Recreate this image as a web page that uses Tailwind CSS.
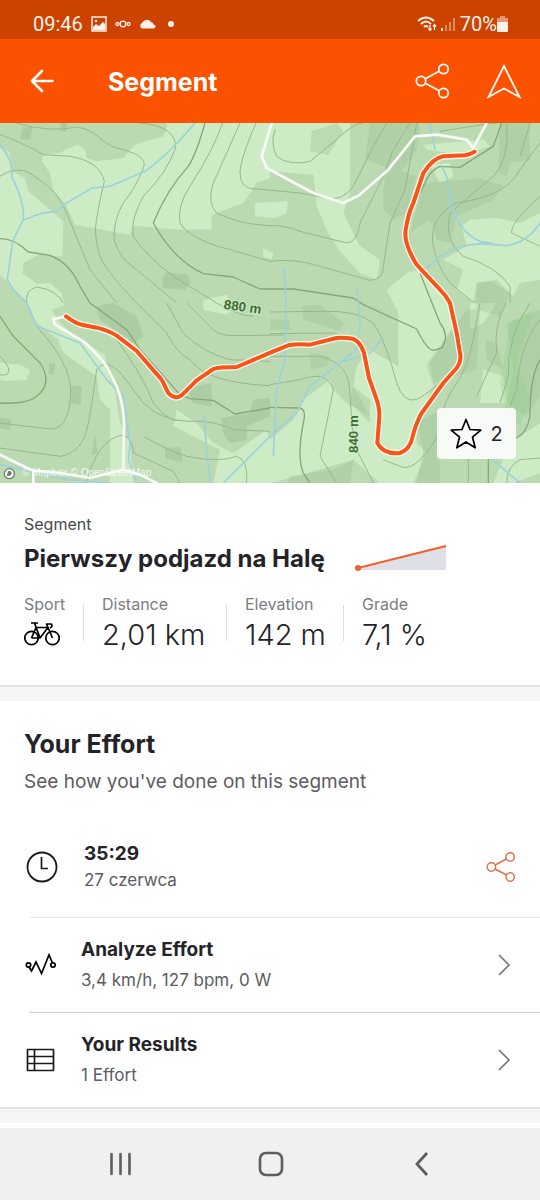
<!DOCTYPE html>
<html lang="en">
<head>
    <meta charset="UTF-8">
    <meta name="viewport" content="width=device-width, initial-scale=1.0">
    <title>Segment</title>
    <script src="https://cdn.jsdelivr.net/npm/@tailwindcss/browser@4"></script>
</head>
<body class="bg-white font-['Inter','Liberation_Sans',sans-serif] text-[#242428]">
    <div class="flex min-h-screen w-full flex-col">
        <!-- status bar -->
        <div class="flex h-[39px] items-center justify-between bg-[#cc4300] pr-8 pl-[33px] pt-2 font-['Roboto',sans-serif] text-xl text-[#fff0e8]">
            <div class="flex items-center gap-2">
                <span>09:46</span>
                <svg class="h-4 w-4" viewBox="0 0 16 16" fill="none" stroke="currentColor" stroke-width="1.500">
                    <rect x="1" y="1" width="14" height="14"/>
                    <path d="M2 14v-3l3-3 3 2 4-4 2 2v6z" fill="currentColor" stroke="none"/>
                    <circle cx="5" cy="5" r="1.200" fill="currentColor" stroke="none"/>
                </svg>
                <svg class="h-4 w-4" viewBox="0 0 16 16" fill="none" stroke="currentColor" stroke-width="1.300">
                    <circle cx="8" cy="8" r="2.800"/><circle cx="2.500" cy="8" r="1.500"/><circle cx="13.500" cy="8" r="1.500"/>
                </svg>
                <svg class="h-4 w-[17px]" viewBox="0 0 17 16" fill="currentColor"><path d="M3 12.500a3 3 0 0 1 0-5.500 5 4.500 0 0 1 9-1 3 3 0 0 1 2.500 2.500 2 2 0 0 1 0 4z"/></svg>
                <span class="ml-1 h-[6px] w-[6px] rounded-full bg-current"></span>
            </div>
            <div class="flex items-center gap-1">
                <svg class="h-[18px] w-[39px]" viewBox="0 0 39 18" fill="none" stroke="currentColor" stroke-width="1.800">
                    <path d="M1 6q8-7 16 0M4 9q5-5 10 0M7 12q2-2 4 0"/>
                    <path d="M13 10v5M11.500 13.500l1.500 2 1.500-2M17.500 15v-5M16 11.500l1.500-2 1.500 2" stroke-width="1.300"/>
                    <path d="M25 16v-3"/>
                    <path d="M29 16v-6M33 16V7M37 16V3" opacity=".45"/>
                </svg>
                <span>70%</span>
                <svg class="-ml-1 h-4 w-[11px]" viewBox="0 0 11 16" fill="currentColor"><path d="M3 0h5v2h3v4H0V2h3z" opacity=".5"/><path d="M0 6h11v9q0 1-1 1H1q-1 0-1-1z"/></svg>
            </div>
        </div>

        <!-- app bar -->
        <header class="flex h-[84px] items-center bg-[#fc5200] pr-[19px] pl-[30px] text-white">
            <button type="button" aria-label="Back">
                <svg class="h-6 w-6" viewBox="0 0 24 24" fill="none" stroke="currentColor" stroke-width="2.600" stroke-linecap="round" stroke-linejoin="round"><path d="M22.500 12H2M12 2L2 12l10 10"/></svg>
            </button>
            <h1 class="ml-[54px] flex-1 pt-1 text-[25px] font-bold">Segment</h1>
            <button type="button" aria-label="Share">
                <svg class="h-9 w-9" viewBox="0 0 36 36" fill="none" stroke="currentColor" stroke-width="1.700"><circle cx="6" cy="18" r="4.700"/><circle cx="28.500" cy="6" r="4.700"/><circle cx="28.500" cy="30" r="4.700"/><path d="M10.200 15.700l14-7.400M10.200 20.300l14 7.400"/></svg>
            </button>
            <button type="button" aria-label="Navigate" class="ml-9">
                <svg class="h-9 w-[34px]" viewBox="0 0 34 36" fill="none" stroke="currentColor" stroke-width="1.700"><path d="M17 3l15.500 31L17 25.500 1.500 34z"/></svg>
            </button>
        </header>

        <!-- map -->
        <div class="relative">
            <svg class="block h-[360px] w-full" viewBox="0 0 1620 1080" preserveAspectRatio="xMidYMid slice" fill="none">
                <defs>
                    <path id="track" d="M198 580Q225 600 245 605L290 614Q325 622 350 638L410 684 450 730 485 770 505 810Q528 835 550 812L590 772 640 738Q655 732 710 732L820 685 865 667Q890 662 930 665L1010 645Q1035 643 1060 648 1080 655 1092 690L1107 765 1130 830Q1138 850 1138 880L1132 960Q1150 995 1200 990 1230 980 1238 940 1248 900 1265 870L1330 780 1370 735Q1385 715 1380 690L1370 630 1350 540Q1340 520 1320 500L1250 425Q1210 360 1217 320 1225 270 1240 240L1270 150Q1300 105 1330 100L1395 97Q1412 94 1424 86"/>
                </defs>
                <rect width="1620" height="1080" fill="#bbdab2"/>
                <!-- clearings -->
                <g fill="#cdecc5">
                    <path d="M0 75L30 88 35 145 75 165 85 205 150 260 190 295 187 400 150 398 120 393 70 420 68 450 110 482 150 480 185 510 195 545 155 560 180 600 240 650 315 695 320 740 345 800 360 900 390 960 400 1080H330V860L300 830 290 760 190 690 175 650 110 600 80 535 0 455z"/>
                    <path d="M500 15L490 40 405 65 370 105 290 115 258 105 258 85 235 65 205 75 180 90 130 95 125 115 150 150 160 200 200 250 225 305 390 335 400 308 540 320 635 318 635 275 730 240 770 180 810 165 810 145 940 155 950 250 985 330 1020 385 1080 450 1130 470 1140 410 1080 370 1030 270 1050 210 1050 0H980L925 50 920 85 990 120 1040 0H500z"/>
                    <path d="M765 240L863 235 860 270 825 285 765 280zM788 375L820 390 815 408 790 402zM610 530L680 515 700 560 680 575 610 560z"/>
                    <path d="M1160 500L1220 450 1260 440 1310 490 1350 545 1360 610 1280 725 1300 790 1250 890 1250 960 1280 990 1240 1080H1050L1060 1010 1110 880 1060 790 1070 730 1110 680 1195 730V570z"/>
                    <path d="M1290 125L1350 120 1360 160 1320 180zM1270 65L1450 50 1470 70 1390 95 1280 80z"/>
                    <path d="M1385 310L1410 290 1490 285 1560 300 1620 270V470L1560 480 1540 520 1490 470 1430 480 1420 540 1370 500 1390 440 1330 410 1400 370z"/>
                    <path d="M810 950L880 890 910 830 990 770 1000 800 1040 840 1110 880 1060 1010 890 1060 810 1080H640L660 980 600 950 520 910 530 860 590 900 640 960 700 990 800 920z"/>
                    <path d="M0 720L60 725 90 740 80 770 20 775 0 770z"/>
                    <path d="M1410 540L1490 540 1450 600 1410 620zM1450 740L1510 760 1520 840 1440 840zM1530 960L1620 900V1050L1540 1080H1480z"/>
                </g>
                <!-- dense forest -->
                <g fill="#9dbd93" fill-opacity=".35">
                    <path d="M70 12H98L90 50 60 48zM185 0H205L195 28 178 22zM500 448L562 455 572 480 555 500 490 495 486 465zM290 550L340 540 410 580 430 640 400 660 300 590z" fill-opacity=".5"/>
                    <path d="M148 720L166 722 162 756 145 752zM215 787L245 790 242 845 210 840zM0 885L34 888 30 920 0 915zM285 935L292 990 275 995zM495 975L540 972 548 1018 495 1005zM560 795L635 780 635 850 580 840zM665 885L750 870 760 830 810 825V880L740 910 740 950 690 960 670 930z" fill-opacity=".5"/>
                    <path d="M935 25L1010 0 1030 25 985 95 930 85zM1110 0L1260 0 1250 80 1200 150 1140 125 1095 110zM1160 130L1250 160 1220 270 1180 290 1150 260 1150 200zM1270 180L1390 170 1440 165 1510 190 1480 230 1370 280 1350 360 1310 350 1290 290 1230 330z"/>
                    <path d="M1500 0H1590V110L1530 120 1520 160 1495 150zM1430 480L1470 475 1530 510 1500 580 1430 560zM905 550L960 545 1030 600 1020 625 980 610 910 590zM930 690L990 700 980 730 930 740zM810 590H870V620H810zM1455 650L1490 660 1510 740 1460 710zM1520 600L1620 560V820L1580 880 1520 840 1540 750z"/>
                    <path d="M1290 720L1400 560 1440 560 1430 740 1300 780zM1250 900L1320 860 1320 1080H1250L1270 980zM1110 830L1060 790 1050 840 1110 900zM870 1060L1000 1040 1060 1010 1140 1080H860z"/>
                </g>
                <path d="M1530 600L1600 560 1550 720 1590 820 1560 910 1520 880 1500 780z" fill="#8fce8b" fill-opacity=".3"/>
                <!-- contour lines -->
                <g stroke="#98b78d" stroke-width="3" stroke-linejoin="round">
                    <path d="M0 35Q60 55 130 95L210 100Q300 115 313 175 290 270 286 320 290 390 310 420 340 470 430 560L500 630Q530 690 570 710 620 780 810 788"/>
                    <path d="M50 0Q150 30 230 12C290 20 300 60 350 75Q440 95 432 130 410 190 370 240 340 290 342 350 360 410 410 440L530 540"/>
                    <path d="M420 0Q530 10 527 75 500 150 430 220 390 290 400 340 440 400 520 460L650 540Q720 580 760 580"/>
                    <path d="M668 0Q640 80 570 190 530 250 540 300 570 350 690 380L810 415Q880 405 960 430L1110 472Q1150 470 1150 430L1170 300 1215 200 1240 60 1250 0"/>
                    <path d="M720 0L640 180Q620 240 650 270 720 305 810 308 850 305 900 325L1040 360Q1070 360 1080 300L1150 160 1180 80 1230 0"/>
                    <path d="M768 0Q720 110 720 150 720 200 770 198L900 210 1000 228Q1050 220 1070 170L1120 70 1160 0"/>
                    <path d="M825 20Q810 60 830 100 870 130 930 115L1010 50Q1060 0 1090 0"/>
                    <path d="M0 160Q60 120 110 165 180 210 200 270L270 440 350 540"/>
                    <path d="M80 540Q75 500 110 492 170 500 190 540M110 610Q210 720 212 800 210 920 150 918L40 905 0 900"/>
                    <path d="M0 975L180 1000Q250 990 265 900 280 820 290 740 320 700 370 760L430 840Q480 890 560 895 640 890 700 920L810 925"/>
                    <path d="M260 1080Q290 950 370 935 400 950 400 990L520 1045 540 1080M350 650Q430 760 460 840 500 890 530 893M430 940Q500 980 560 1000 660 1020 710 1000 745 1010 740 1080"/>
                    <path d="M500 540L550 630Q610 690 690 710L810 715M560 540L620 600Q650 640 700 638L850 636M0 700Q40 740 20 755L0 756"/>
                    <path d="M810 567L960 565Q1070 560 1120 600 1160 660 1190 780 1210 840 1250 830 1300 800 1330 770M810 632L1010 630M810 700L960 700Q1040 720 1048 790L1060 960 1120 1080M810 785L900 770Q980 740 1000 800L980 900 960 1000 1010 1080"/>
                    <path d="M1620 60L1560 140Q1520 220 1370 240 1290 280 1298 360 1310 430 1350 480L1410 530 1430 540M1520 0Q1530 110 1480 160 1420 210 1350 270 1330 350 1390 400 1490 430 1530 490L1530 540M1320 25Q1440 5 1490 0M1590 0L1560 100M1620 220Q1530 300 1535 330L1620 370"/>
                    <path d="M1440 540L1420 650Q1400 740 1370 780 1320 850 1330 900L1300 960Q1240 1050 1200 1030L1150 1010M1520 540Q1480 600 1490 690L1430 820M1590 540Q1520 640 1525 760L1500 840M1620 590Q1560 660 1550 800L1530 850M1620 1005L1560 1010Q1520 1030 1520 1080M1405 1000V1080"/>
                </g>
                <!-- index contours -->
                <g stroke="#86a778" stroke-width="4" stroke-linejoin="round">
                    <path d="M615 0Q590 90 565 130 500 200 460 300 520 410 610 452L700 462 780 498H880L1060 525 1090 545 1250 618Q1280 680 1300 682L1325 675Q1350 640 1320 600L1300 550 1260 450M0 347Q40 345 85 387L150 397Q210 420 240 490L270 540 380 620 420 680 500 770 540 815 570 827 640 832 705 873 810 855"/>
                    <path d="M0 580L40 640 120 720Q160 780 110 820 80 845 0 840M810 853L900 855Q920 860 910 900 890 1000 910 1050L930 1080M1505 0L1480 70 1380 133 1320 130Q1290 140 1270 190L1230 270M1620 710Q1590 760 1590 880 1580 930 1550 945M1465 1000V1080"/>
                </g>
                <!-- streams -->
                <g stroke="#9dd2da" stroke-width="5" stroke-linejoin="round">
                    <path d="M585 0Q500 100 435 145L330 190 275 195 200 240 170 265 120 272 68 292M0 65Q40 110 35 160 75 240 70 290L38 355 22 470Q50 520 80 540L110 608 240 660 320 770 370 820 390 960 385 1010 410 1080"/>
                    <path d="M610 875L630 1080M670 1080L810 940 890 870 930 790 1070 680 1080 600 1070 490M1030 715L1110 690 1150 645M852 435L858 540 855 710 830 800 820 1000"/>
                    <path d="M1290 0L1305 80M1325 130L1340 160 1350 240Q1380 330 1440 355L1480 362M1620 300Q1580 360 1520 368L1440 362 1380 370 1320 400 1280 435M1470 1005L1560 1080M0 1025L200 1070 330 1080"/>
                </g>
                <!-- roads -->
                <g stroke="#f8fbf6" stroke-width="8" stroke-linejoin="round" stroke-linecap="round">
                    <path d="M815 0L785 100 800 135 940 210 1030 240 1075 218 1165 140 1245 40 1310 35 1400 50 1420 75 1460 0"/>
                    <path d="M200 580L160 588 165 605 250 655Q290 690 320 730L350 790Q370 840 372 900L370 1035M0 995L50 1020 100 1043 180 1050 270 1065 370 1040 420 1055 470 1080M100 1045V1080"/>
                </g>
                <!-- recorded track -->
                <g stroke-linejoin="round" stroke-linecap="round">
                    <use href="#track" stroke="#fff8ea" stroke-width="20"/>
                    <use href="#track" stroke="#f5551a" stroke-width="12"/>
                </g>
                <g fill="#3f6b35" stroke="#cdebc5" stroke-width="6" paint-order="stroke" font-family="Liberation Sans, sans-serif" font-size="40" font-weight="bold">
                    <text transform="translate(670 557) rotate(8)">880 m</text>
                    <text transform="translate(1073 990) rotate(-90)">840 m</text>
                </g>
                <circle cx="28" cy="1052" r="15" fill="#fff" stroke="#6f7d6c" stroke-width="4"/>
                <path d="M20 1060l4-15q9-4 11 4t-15 11z" fill="#6f7d6c"/>
                <text x="66" y="1060" fill="#fff" fill-opacity=".8" font-family="Liberation Sans, sans-serif" font-size="30">© Mapbox © OpenStreetMap</text>
            </svg>
            <button type="button" class="absolute right-6 bottom-6 flex h-[51px] w-[79px] items-center justify-center gap-2 rounded bg-[#f8faf7] text-xl" aria-label="2 stars">
                <svg class="h-8 w-8" viewBox="0 0 32 32" fill="none" stroke="#000" stroke-width="1.700" stroke-linejoin="round"><path d="M16 1.500l4 10 10.800.7-8.300 7 2.700 10.600-9.200-5.800-9.200 5.800 2.700-10.600-8.300-7 10.800-.7z"/></svg>
                <span>2</span>
            </button>
        </div>

        <main class="flex-1">
            <section class="border-b-2 border-[#e3e3e6] px-6 pt-[29px] pb-[31px]">
                <p class="text-base leading-6 text-[#494950]">Segment</p>
                <div class="flex h-[42px] items-center gap-[30px]">
                    <h2 class="pt-1 text-2xl font-bold">Pierwszy podjazd na Halę</h2>
                    <svg class="h-[27px] w-[92px] shrink-0" viewBox="0 0 92 27">
                        <path d="M3 25L91 2v24H3z" fill="#dfdfe8"/><path d="M3 24L91 2" stroke="#f0602c" stroke-width="2"/><circle cx="3" cy="24" r="3" fill="#f0602c"/>
                    </svg>
                </div>
                <div class="mt-[14px] grid grid-cols-[59px_143px_117px_1fr]">
                    <div>
                        <p class="text-base leading-6 text-[#7c7c82]">Sport</p>
                        <svg class="mt-1 h-7 w-9" viewBox="0 0 36 28" fill="none" stroke="#000" stroke-width="1.700" stroke-linejoin="round"><circle cx="7.500" cy="18" r="6.700"/><circle cx="28.500" cy="18" r="6.700"/><path d="M7.500 18h8.500L24 7.500H12L7.500 18M16 18L10.500 3M7 3h7M28.500 18L22.500 4H27q2.500 2-1 4"/></svg>
                    </div>
                    <div class="flex items-center gap-[18px]">
                        <div class="h-9 w-px bg-[#dcdce0]"></div>
                        <div><p class="text-base leading-6 text-[#7c7c82]">Distance</p><p class="text-[29px] leading-[38px] font-light">2,01 km</p></div>
                    </div>
                    <div class="flex items-center gap-[18px]">
                        <div class="h-9 w-px bg-[#dcdce0]"></div>
                        <div><p class="text-base leading-6 text-[#7c7c82]">Elevation</p><p class="text-[29px] leading-[38px] font-light whitespace-nowrap">142 m</p></div>
                    </div>
                    <div class="flex items-center gap-[18px]">
                        <div class="h-9 w-px bg-[#dcdce0]"></div>
                        <div><p class="text-base leading-6 text-[#7c7c82]">Grade</p><p class="text-[29px] leading-[38px] font-light">7,1 %</p></div>
                    </div>
                </div>
            </section>
            <div class="h-[14px] bg-[#f6f6f9]"></div>

            <section class="border-b-2 border-[#e3e3e6]">
                <div class="px-6 pt-[25px]">
                    <h2 class="text-[25px] leading-9 font-bold">Your Effort</h2>
                    <p class="mt-1 text-[19px] leading-8 text-[#5c5c62]">See how you've done on this segment</p>
                </div>
                <div class="mt-[19px] flex h-[100px] items-center pr-6 pl-[26px]">
                    <svg class="h-8 w-8" viewBox="0 0 32 32" fill="none" stroke="#1a1a1d" stroke-width="1.800"><circle cx="16" cy="16" r="14.500"/><path d="M15.500 6v11.500H22" stroke-width="1.700"/></svg>
                    <div class="ml-[26px] flex-1">
                        <p class="text-[19px] leading-[26px] font-bold">35:29</p>
                        <p class="text-[17px] leading-[26px] text-[#5c5c62]">27 czerwca</p>
                    </div>
                    <button type="button" aria-label="Share effort">
                        <svg class="h-[30px] w-[30px]" viewBox="0 0 36 36" fill="none" stroke="#e0704c" stroke-width="1.800"><circle cx="6.500" cy="18" r="5"/><circle cx="29" cy="6" r="5"/><circle cx="29" cy="30" r="5"/><path d="M11 15.600l13.500-7.200M11 20.400l13.500 7.200"/></svg>
                    </button>
                </div>
                <div class="ml-[30px] h-px bg-[#e3e3e6]"></div>
                <a href="#" class="flex h-[94px] items-center pr-[29px] pl-[25px]">
                    <svg class="h-8 w-8" viewBox="0 0 32 32" fill="none" stroke="#000" stroke-width="1.700"><circle cx="3.500" cy="16" r="2.200"/><circle cx="28" cy="16" r="2.200"/><path d="M4 18l2.500 4 4.500-9 5.500 11.500L24 6l3.500 8"/></svg>
                    <div class="ml-6 flex-1">
                        <p class="text-[19px] leading-[30px] font-bold">Analyze Effort</p>
                        <p class="text-[17px] leading-[30px] text-[#5c5c62]">3,4 km/h, 127 bpm, 0 W</p>
                    </div>
                    <svg class="h-6 w-[14px]" viewBox="0 0 14 24" fill="none" stroke="#77777c" stroke-width="1.700"><path d="M2 2l10 10L2 22"/></svg>
                </a>
                <div class="ml-[30px] h-px bg-[#cfcfd2]"></div>
                <a href="#" class="flex h-[94px] items-center pr-[29px] pl-[25px]">
                    <svg class="h-8 w-8" viewBox="0 0 32 32" fill="none" stroke="#1a1a1d" stroke-width="1.700"><rect x="2.500" y="5.500" width="26" height="21" rx=".5"/><path d="M2.500 12.500h26M2.500 19.500h26M9.500 5.500v21"/></svg>
                    <div class="ml-6 flex-1">
                        <p class="text-[19px] leading-[30px] font-bold">Your Results</p>
                        <p class="text-[17px] leading-[30px] text-[#5c5c62]">1 Effort</p>
                    </div>
                    <svg class="h-6 w-[14px]" viewBox="0 0 14 24" fill="none" stroke="#77777c" stroke-width="1.700"><path d="M2 2l10 10L2 22"/></svg>
                </a>
            </section>
            <div class="h-[14px] bg-[#f6f6f9]"></div>
        </main>

        <!-- system navigation -->
        <nav class="flex h-[72px] items-center justify-between bg-[#f0f0f0] px-[107px] text-[#5e5e5e]">
            <button type="button" aria-label="Recent apps"><svg class="h-7 w-7" viewBox="0 0 28 28" stroke="currentColor" stroke-width="2.600" stroke-linecap="round"><path d="M4.500 4v20M13.500 4v20M22.500 4v20"/></svg></button>
            <button type="button" aria-label="Home"><svg class="h-7 w-7" viewBox="0 0 28 28" fill="none" stroke="currentColor" stroke-width="2.600"><rect x="4" y="3" width="22" height="22" rx="6"/></svg></button>
            <button type="button" aria-label="Go back"><svg class="h-7 w-7" viewBox="0 0 28 28" fill="none" stroke="currentColor" stroke-width="2.800"><path d="M22 3L12 14l10 11"/></svg></button>
        </nav>
    </div>
</body>
</html>
